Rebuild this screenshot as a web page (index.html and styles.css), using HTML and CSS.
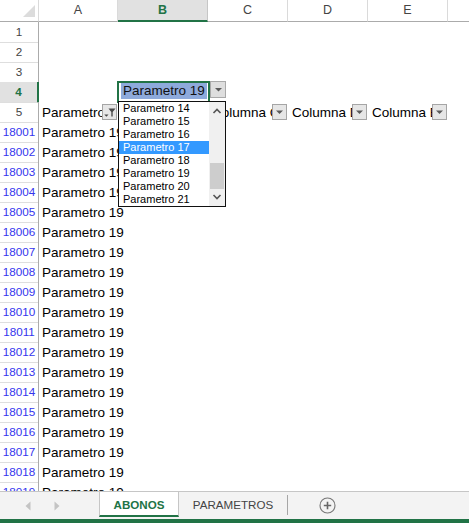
FILE: index.html
```html
<!DOCTYPE html>
<html lang="es">
<head>
<meta charset="utf-8">
<title>ABONOS</title>
<link rel="stylesheet" href="styles.css">
</head>
<body>
<div class="app">
  <div class="sheet">
    <div class="row hdr">
      <div class="corner"><span class="tri"></span></div>
      <div class="ch">A</div>
      <div class="ch sel">B</div>
      <div class="ch">C</div>
      <div class="ch">D</div>
      <div class="ch">E</div>
      <div class="ch last"></div>
    </div>
    <div class="row"><div class="rh">1</div></div>
    <div class="row"><div class="rh">2</div></div>
    <div class="row"><div class="rh">3</div></div>
    <div class="row"><div class="rh sel">4</div></div>
    <div class="row">
      <div class="rh">5</div>
      <div class="c f">Parametro 1<span class="fb"><svg width="15" height="16" viewBox="0 0 15 16"><path d="M6.5 4.5h7l-2.8 3.6v4.4h-1.4v-4.4z" fill="#4a4a4a"/><path d="M2.3 10.5h4.2l-2.1 2.2z" fill="#4a4a4a"/></svg></span></div>
      <div class="c"></div>
      <div class="c f">Columna C<span class="fb"><svg width="15" height="16" viewBox="0 0 15 16"><path d="M4 6.5h7l-3.5 3.6z" fill="#5a5a5a"/></svg></span></div>
      <div class="c f">Columna D<span class="fb"><svg width="15" height="16" viewBox="0 0 15 16"><path d="M4 6.5h7l-3.5 3.6z" fill="#5a5a5a"/></svg></span></div>
      <div class="c f">Columna E<span class="fb"><svg width="15" height="16" viewBox="0 0 15 16"><path d="M4 6.5h7l-3.5 3.6z" fill="#5a5a5a"/></svg></span></div>
    </div>
    <div class="row"><div class="rh blue">18001</div><div class="c">Parametro 19</div></div>
    <div class="row"><div class="rh blue">18002</div><div class="c">Parametro 19</div></div>
    <div class="row"><div class="rh blue">18003</div><div class="c">Parametro 19</div></div>
    <div class="row"><div class="rh blue">18004</div><div class="c">Parametro 19</div></div>
    <div class="row"><div class="rh blue">18005</div><div class="c">Parametro 19</div></div>
    <div class="row"><div class="rh blue">18006</div><div class="c">Parametro 19</div></div>
    <div class="row"><div class="rh blue">18007</div><div class="c">Parametro 19</div></div>
    <div class="row"><div class="rh blue">18008</div><div class="c">Parametro 19</div></div>
    <div class="row"><div class="rh blue">18009</div><div class="c">Parametro 19</div></div>
    <div class="row"><div class="rh blue">18010</div><div class="c">Parametro 19</div></div>
    <div class="row"><div class="rh blue">18011</div><div class="c">Parametro 19</div></div>
    <div class="row"><div class="rh blue">18012</div><div class="c">Parametro 19</div></div>
    <div class="row"><div class="rh blue">18013</div><div class="c">Parametro 19</div></div>
    <div class="row"><div class="rh blue">18014</div><div class="c">Parametro 19</div></div>
    <div class="row"><div class="rh blue">18015</div><div class="c">Parametro 19</div></div>
    <div class="row"><div class="rh blue">18016</div><div class="c">Parametro 19</div></div>
    <div class="row"><div class="rh blue">18017</div><div class="c">Parametro 19</div></div>
    <div class="row"><div class="rh blue">18018</div><div class="c">Parametro 19</div></div>
    <div class="row"><div class="rh blue">18019</div><div class="c">Parametro 19</div></div>

    <div class="active"></div>
    <div class="combo-text">Parametro 19</div>
    <div class="combo-btn"><svg width="15" height="17" viewBox="0 0 15 17"><path d="M4 7h7l-3.5 3.6z" fill="#5a5a5a"/></svg></div>
    <div class="list">
      <div class="items">
        <div class="it">Parametro 14</div>
        <div class="it">Parametro 15</div>
        <div class="it">Parametro 16</div>
        <div class="it on">Parametro 17</div>
        <div class="it">Parametro 18</div>
        <div class="it">Parametro 19</div>
        <div class="it">Parametro 20</div>
        <div class="it">Parametro 21</div>
      </div>
      <div class="sb">
        <svg class="up" width="16" height="12" viewBox="0 0 16 12"><path d="M4.5 8l3.5-3.5L11.5 8" stroke="#555" stroke-width="1.6" fill="none"/></svg>
        <div class="thumb"></div>
        <svg class="dn" width="16" height="12" viewBox="0 0 16 12"><path d="M4.5 4l3.5 3.5L11.5 4" stroke="#555" stroke-width="1.6" fill="none"/></svg>
      </div>
    </div>
  </div>

  <div class="tabs">
    <div class="nav">
      <svg width="6" height="10" viewBox="0 0 6 10"><path d="M5.5 0.5v9L0.5 5z" fill="#c4c4c4"/></svg>
      <svg width="6" height="10" viewBox="0 0 6 10"><path d="M0.5 0.5v9L5.5 5z" fill="#c4c4c4"/></svg>
    </div>
    <div class="tab on">ABONOS</div>
    <div class="tab">PARAMETROS</div>
    <div class="sep"></div>
    <div class="add"><svg width="17" height="17" viewBox="0 0 17 17"><circle cx="8.5" cy="8.5" r="7.5" stroke="#777" stroke-width="1.1" fill="none"/><path d="M8.5 4.8v7.4M4.8 8.5h7.4" stroke="#666" stroke-width="1.6"/></svg></div>
  </div>
  <div class="status"></div>
</div>
</body>
</html>
```

FILE: styles.css
```css
html, body {
  margin: 0;
  padding: 0;
  background: #fff;
}
.app {
  width: 469px;
  height: 523px;
  display: flex;
  flex-direction: column;
  overflow: hidden;
  font-family: "Liberation Sans", Arial, sans-serif;
}
.sheet {
  position: relative;
  height: 491px;
  overflow: hidden;
  flex: none;
}
.row {
  display: grid;
  grid-template-columns: 39px 79px 90px 80px 80px 80px 1fr;
  height: 20px;
}
.row.hdr {
  height: 22px;
}
.corner {
  position: relative;
  border-right: 1px solid #dadada;
  border-bottom: 1px solid #ababab;
}
.corner .tri {
  position: absolute;
  right: 3px;
  bottom: 4px;
  width: 0;
  height: 0;
  border-left: 12px solid transparent;
  border-bottom: 12px solid #dcdcdc;
}
.ch {
  border-right: 1px solid #dadada;
  border-bottom: 1px solid #ababab;
  text-align: center;
  font-size: 12.5px;
  line-height: 21px;
  color: #444;
}
.ch.last {
  border-right: none;
}
.ch.sel {
  background: #e1e1e1;
  border-bottom: 2px solid #217346;
  border-right-color: #c6c6c6;
  color: #217346;
  font-weight: bold;
  line-height: 20px;
}
.rh {
  box-sizing: border-box;
  border-right: 1px solid #ababab;
  border-bottom: 1px solid #dedede;
  text-align: center;
  font-size: 11.7px;
  line-height: 20px;
  color: #444;
}
.rh.sel {
  background: #e1e1e1;
  border-right: 2px solid #217346;
  color: #217346;
  font-weight: bold;
}
.rh.blue {
  color: #3434ee;
}
.c {
  padding-left: 3px;
  font-size: 13.5px;
  line-height: 21px;
  color: #000;
  white-space: nowrap;
}
.c.f {
  position: relative;
  overflow: hidden;
  padding-left: 4px;
}
.row .c.f:nth-child(2) {
  padding-left: 3px;
}
.fb {
  position: absolute;
  right: 1px;
  top: 2px;
  width: 15px;
  height: 16px;
  box-sizing: border-box;
  background: #e6e6e6;
  border: 1px solid #a5a5a5;
  display: flex;
  align-items: center;
  justify-content: center;
}
.fb svg {
  display: block;
  flex: none;
}

/* combo box over B4 */
.active {
  position: absolute;
  left: 117px;
  top: 81px;
  width: 93px;
  height: 22px;
  box-sizing: border-box;
  border: 2px solid #217346;
}
.combo-text {
  position: absolute;
  left: 121px;
  top: 83px;
  width: 86px;
  height: 16px;
  background: #8eaadb;
  font-size: 13.5px;
  line-height: 16px;
  padding-left: 2px;
  box-sizing: border-box;
  color: #111;
  white-space: nowrap;
}
.combo-btn {
  position: absolute;
  left: 210px;
  top: 81px;
  width: 16px;
  height: 17px;
  box-sizing: border-box;
  background: #dedede;
  border: 1px solid #a9a9a9;
  display: flex;
  align-items: center;
  justify-content: center;
}
.combo-btn svg {
  display: block;
  flex: none;
}
.list {
  position: absolute;
  left: 118px;
  top: 101px;
  width: 108px;
  height: 106px;
  box-sizing: border-box;
  border: 1px solid #111;
  background: #fff;
  display: flex;
}
.items {
  flex: 1;
}
.it {
  height: 13px;
  line-height: 13px;
  font-size: 11px;
  padding-left: 4px;
  color: #000;
  white-space: nowrap;
}
.it.on {
  background: #3399ff;
  color: #fff;
}
.sb {
  width: 16px;
  background: #f0f0f0;
  position: relative;
}
.sb .up {
  position: absolute;
  top: 3px;
  left: 0;
}
.sb .dn {
  position: absolute;
  bottom: 3px;
  left: 0;
}
.sb .thumb {
  position: absolute;
  left: 1px;
  right: 1px;
  top: 61px;
  height: 26px;
  background: #cdcdcd;
}

/* sheet tabs */
.tabs {
  flex: none;
  height: 28px;
  box-sizing: border-box;
  border-top: 1px solid #c6c6c6;
  background: #f3f3f3;
  display: flex;
  align-items: stretch;
  font-size: 11.6px;
}
.nav {
  width: 99px;
  display: flex;
  align-items: center;
  padding-left: 25px;
  box-sizing: border-box;
  gap: 23px;
}
.nav svg {
  display: block;
}
.tab {
  width: 108px;
  display: flex;
  align-items: center;
  justify-content: center;
  color: #444;
  padding-bottom: 2px;
  box-sizing: border-box;
}
.tab.on {
  width: 80px;
  height: 25px;
  background: #fff;
  border-left: 1px solid #c6c6c6;
  border-right: 1px solid #c6c6c6;
  border-bottom: 2px solid #217346;
  color: #217346;
  font-weight: bold;
  padding-bottom: 0;
  padding-top: 1px;
}
.sep {
  width: 1px;
  background: #a6a6a6;
  margin: 3px 0 4px;
}
.add {
  margin-left: 31px;
  display: flex;
  align-items: center;
}
.add svg {
  display: block;
}
.status {
  flex: 1;
  background: #217346;
}
```
